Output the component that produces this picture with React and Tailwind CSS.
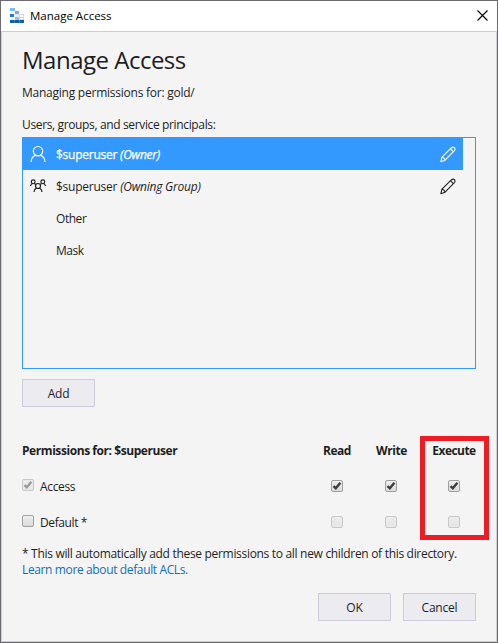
import React from "react";

function AppLogo() {
  return (
    <svg width="15" height="16" viewBox="0 0 15 16" shapeRendering="crispEdges">
      <rect x="9" y="6" width="5" height="6" fill="#d3d6da" />
      <rect x="10" y="7" width="3" height="2" fill="#ffffff" />
      <rect x="10" y="10" width="3" height="1" fill="#ffffff" />
      <rect x="5" y="6" width="4" height="3" fill="#e9ecf0" />
      <rect x="0" y="9" width="4" height="3" fill="#f1f3f6" />
      <rect x="0" y="0" width="5" height="3" fill="#83b9f9" />
      <rect x="5" y="3" width="4" height="3" fill="#6fadf6" />
      <rect x="0" y="6" width="4" height="3" fill="#1c7fd4" />
      <rect x="5" y="9" width="4" height="3" fill="#8fc1f7" />
      <rect x="0" y="12" width="14" height="3" fill="#0f5ea8" />
      <path d="M4.5 12v3M9.5 12v3" stroke="#3f7fbb" strokeWidth="1" />
    </svg>
  );
}

function CloseIcon() {
  return (
    <svg width="11" height="11" viewBox="0 0 11 11" fill="none" stroke="#000" strokeWidth="1.1">
      <path d="M0.5 0.5l10 10M10.5 0.5l-10 10" />
    </svg>
  );
}

function UserIcon() {
  return (
    <svg width="16" height="18" viewBox="0 0 16 18" fill="none" stroke="currentColor" strokeWidth="1.15">
      <circle cx="8" cy="6.2" r="4.7" />
      <path d="M1 17c.2-3.6 2-5.8 4.6-6.7M15 17c-.2-3.6-2-5.8-4.6-6.7" />
    </svg>
  );
}

function GroupIcon() {
  return (
    <svg width="16" height="14" viewBox="0 0 16 14" fill="none" stroke="currentColor" strokeWidth="1.15">
      <circle cx="3.2" cy="2.8" r="1.9" />
      <circle cx="12.8" cy="2.8" r="1.9" />
      <circle cx="8" cy="7" r="2.5" />
      <path d="M.6 7c.2-1.4.8-2.1 1.6-2.5M4.3 4.4l1.5 1M15.4 7c-.2-1.4-.8-2.1-1.6-2.5M11.7 4.4l-1.5 1" />
      <path d="M4 13c.1-2.2 1-3.4 2.5-4.1M12 13c-.1-2.2-1-3.4-2.5-4.1" />
    </svg>
  );
}

function PencilIcon() {
  return (
    <svg width="16" height="17" viewBox="0 0 17 17" fill="none" stroke="currentColor" strokeWidth="1.15" strokeLinejoin="round">
      <path d="M.9 16.1l1.2-4.8L12.3 1.3c1-.9 2.2-.9 3 0 .9.8.9 2 0 3L5.4 14.6z" />
      <path d="M11.3 2.5l2.9 2.9M2.1 11.3c1.7.3 2.9 1.5 3.3 3.3" />
    </svg>
  );
}

function Checkbox({ checked, disabled }) {
  return (
    <span
      className={
        "flex size-3 shrink-0 items-center justify-center rounded-[2px] border bg-linear-to-b " +
        (disabled
          ? "border-[#c9c9c9] from-[#ececec] to-[#e6e6e6] text-[#9b9b9b]"
          : "border-[#a0a0a0] from-[#eeeeee] to-[#dcdcdc] text-[#3c3c3c]")
      }
    >
      {checked && (
        <svg width="10" height="10" viewBox="0 0 10 10" fill="none" stroke="currentColor" strokeWidth="2.4">
          <path d="M1.5 5.2l2.3 2.1L8.4 1.8" />
        </svg>
      )}
    </span>
  );
}

function CheckCell({ checked, disabled }) {
  return (
    <span className="flex justify-center pb-0.5">
      <Checkbox checked={checked} disabled={disabled} />
    </span>
  );
}

function Button({ children }) {
  return (
    <button className="flex h-7 w-[73px] items-center justify-center border border-[#ccccdd] bg-[#ececf0] pt-px text-[12px] tracking-[-0.2px]">
      {children}
    </button>
  );
}

function Row({ icon, name, role, selected, editable }) {
  return (
    <li
      className={
        "flex h-8 w-[440px] items-center pr-[7px] pl-[7px] " +
        (selected ? "bg-[#3399ff] text-white" : "")
      }
    >
      <span className="flex w-[26px]">{icon}</span>
      <span
        className={
          "flex-1 pt-0.5 " +
          (selected
            ? "tracking-[-0.25px] [-webkit-text-stroke:0.25px_currentColor]"
            : role
              ? "tracking-[-0.24px]"
              : "tracking-[-0.45px]")
        }
      >
        {name}
        {role && <em> ({role})</em>}
      </span>
      {editable && <PencilIcon />}
    </li>
  );
}

export default function App() {
  return (
    <div className="flex h-[643px] w-[498px] flex-col border border-[#6d6a70] bg-white font-['Open_Sans','Noto_Sans',sans-serif] text-[12px] leading-4 text-[#1e1e1e]">
      <header className="flex h-[30px] shrink-0 items-center pr-[9px] pl-[9px]">
        <AppLogo />
        <span className="ml-[5px] flex-1 text-[11.5px] text-black">Manage Access</span>
        <span className="pb-[2px]">
          <CloseIcon />
        </span>
      </header>

      <main className="flex flex-1 flex-col border border-[#ccccdd] bg-[#f4f4f4] pr-5 pl-5">
        <h1 className="mt-3 h-8 text-[24px] leading-8 tracking-[-0.5px]">Manage Access</h1>
        <p className="mt-[9px] tracking-[-0.24px]">Managing permissions for: gold/</p>
        <p className="mt-4 tracking-[-0.36px]">Users, groups, and service principals:</p>

        <ul className="mt-1 h-[232px] w-[454px] shrink-0 border border-[#3399ff]">
          <Row icon={<UserIcon />} name="$superuser" role="Owner" selected editable />
          <Row icon={<GroupIcon />} name="$superuser" role="Owning Group" editable />
          <Row name="Other" />
          <Row name="Mask" />
        </ul>

        <div className="mt-[10px]">
          <Button>Add</Button>
        </div>

        <section className="relative mt-[35px] grid grid-cols-[288px_54px_54px_72px] grid-rows-[18px_54px_18px] items-center">
          <h2 className="font-bold tracking-[-0.43px]">Permissions for: $superuser</h2>
          <span className="text-center font-bold tracking-[-0.5px]">Read</span>
          <span className="pl-px text-center font-bold tracking-[-0.4px]">Write</span>
          <span className="text-center font-bold tracking-[-0.55px]">Execute</span>

          <label className="flex items-start gap-[6px]">
            <Checkbox checked disabled />
            <span className="tracking-[-0.35px]">Access</span>
          </label>
          <CheckCell checked />
          <CheckCell checked />
          <CheckCell checked />

          <label className="flex items-start gap-[6px]">
            <Checkbox />
            <span className="tracking-[-0.4px]">Default *</span>
          </label>
          <CheckCell disabled />
          <CheckCell disabled />
          <CheckCell disabled />

          <div className="absolute -top-[6px] left-[398px] h-[104px] w-[69px] border-5 border-[#ee1c25]" />
        </section>

        <p className="mt-[14px] tracking-[-0.31px] whitespace-nowrap">
          * This will automatically add these permissions to all new children of this directory.
        </p>
        <a className="tracking-[-0.37px] text-[#106ebe]">Learn more about default ACLs.</a>

        <footer className="mt-[15px] flex w-[454px] justify-end gap-3">
          <Button>OK</Button>
          <Button>Cancel</Button>
        </footer>
      </main>
    </div>
  );
}
